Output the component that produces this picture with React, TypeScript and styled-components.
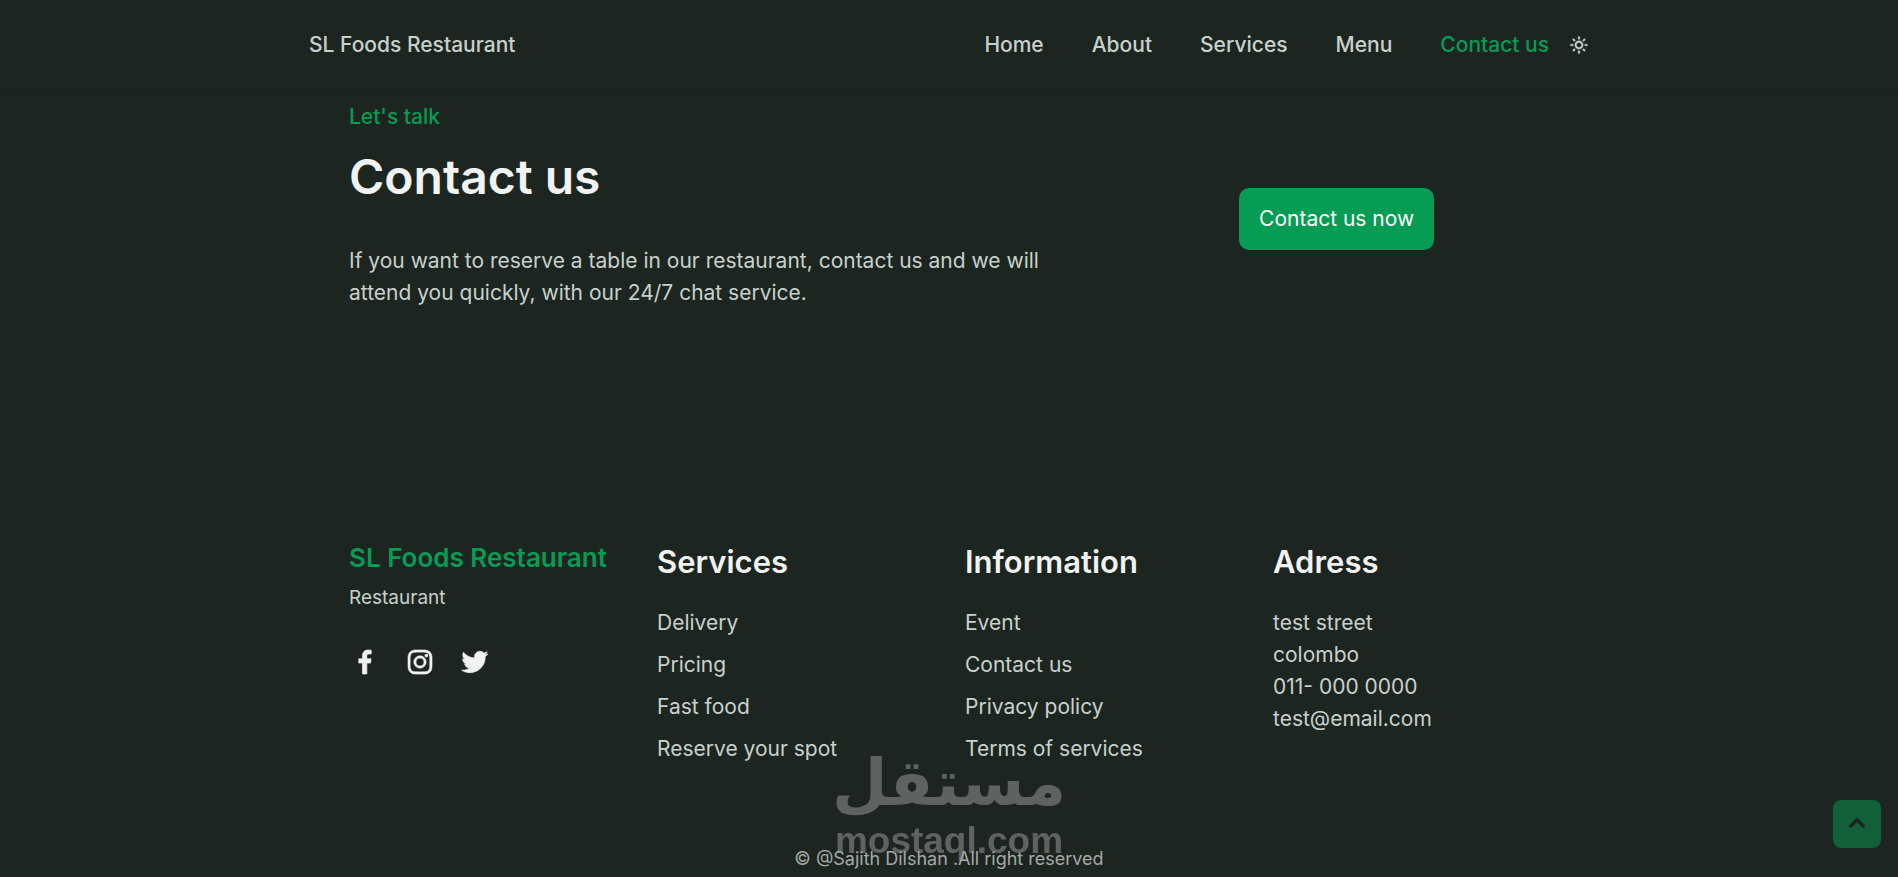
import React from "react";
import styled, { createGlobalStyle, ThemeProvider } from "styled-components";
import {
  BiSun,
  BiLogoFacebook,
  BiLogoInstagram,
  BiLogoTwitter,
  BiChevronUp,
} from "react-icons/bi";

const theme = {
  accent: "#069c54",
  title: "#f1f3f2",
  text: "#c7d1cc",
  body: "#1d2521",
};

type Theme = typeof theme;
type Themed = { theme: Theme };

const GlobalStyle = createGlobalStyle`
  * { box-sizing: border-box; margin: 0; padding: 0; }
  body {
    background: ${theme.body};
    color: ${theme.text};
    font: 400 21px/32px Inter, "Open Sans", sans-serif;
  }
  a { color: inherit; text-decoration: none; }
  ul { list-style: none; }
  button { font: inherit; border: 0; cursor: pointer; }
`;

const Header = styled.header`
  position: sticky;
  top: 0;
  z-index: 10;
  background: ${(p: Themed) => p.theme.body};
  box-shadow: 0 2px 4px rgba(0, 0, 0, 0.1);
`;

const Nav = styled.nav`
  display: flex;
  align-items: center;
  justify-content: space-between;
  max-width: 1280px;
  height: 90px;
  margin: 0 auto;
  font-weight: 500;
`;

const NavRight = styled.div`
  display: flex;
  align-items: center;
  gap: 20px;
`;

const NavList = styled.ul`
  display: flex;
  gap: 48px;
`;

const NavLink = styled.a<{ $active?: boolean }>`
  color: ${(p) => (p.$active ? theme.accent : theme.text)};
`;

const ThemeToggle = styled.button`
  display: flex;
  background: none;
  color: inherit;
  font-size: 20px;
`;

const Container = styled.div`
  max-width: 1200px;
  margin: 0 auto;
`;

const Contact = styled.section`
  display: grid;
  grid-template-columns: 1.75fr 1fr;
  gap: 32px;
  align-items: center;
  padding: 11px 0 201px;
`;

const Eyebrow = styled.span`
  display: block;
  color: ${(p: Themed) => p.theme.accent};
  font-weight: 500;
`;

const Heading = styled.h1`
  margin: 8px 0 32px;
  color: ${(p: Themed) => p.theme.title};
  font-size: 48px;
  font-weight: 600;
  line-height: 72px;
`;

const Lead = styled.p`
  margin-bottom: 28px;
`;

const ContactAction = styled.div`
  display: flex;
  justify-content: center;
`;

const PrimaryButton = styled.button`
  padding: 15px 20px;
  border-radius: 10px;
  background: ${(p: Themed) => p.theme.accent};
  color: #fff;
`;

const FooterGrid = styled.footer`
  display: grid;
  grid-template-columns: repeat(4, 1fr);
  gap: 32px;
`;

const Brand = styled.a`
  display: block;
  margin-bottom: 4px;
  color: ${(p: Themed) => p.theme.accent};
  font-size: 26px;
  font-weight: 600;
  line-height: 40px;
  white-space: nowrap;
`;

const Tagline = styled.p`
  margin-bottom: 32px;
  font-size: 19px;
`;

const Socials = styled.div`
  display: flex;
  gap: 23px;
  color: ${(p: Themed) => p.theme.title};
  font-size: 32px;
`;

const SocialLink = styled.a`
  display: flex;
`;

const ColumnTitle = styled.h3`
  margin-bottom: 21px;
  color: ${(p: Themed) => p.theme.title};
  font-size: 31px;
  font-weight: 600;
  line-height: 48px;
`;

const ItemList = styled.ul<{ $gap: number }>`
  display: grid;
  gap: ${(p) => p.$gap}px;
`;

const Copyright = styled.p`
  padding: 78px 0 3px;
  color: #a3aaa6;
  font-size: 18px;
  text-align: center;
`;

const Watermark = styled.div`
  position: fixed;
  left: 50%;
  bottom: 14px;
  z-index: 20;
  transform: translateX(-50%);
  color: #a0a0a0;
  opacity: 0.5;
  font-weight: 700;
  text-align: center;
  pointer-events: none;
`;

const WatermarkArabic = styled.div`
  font-family: "DejaVu Sans", sans-serif;
  font-size: 64px;
  line-height: 72px;
`;

const WatermarkLatin = styled.div`
  font-family: "Liberation Sans", sans-serif;
  font-size: 37px;
  line-height: 44px;
`;

const ScrollTop = styled.a`
  position: fixed;
  right: 17px;
  bottom: 29px;
  z-index: 10;
  display: flex;
  align-items: center;
  justify-content: center;
  width: 48px;
  height: 48px;
  border-radius: 8px;
  background: ${(p: Themed) => p.theme.accent};
  color: ${(p: Themed) => p.theme.body};
  font-size: 34px;
  opacity: 0.5;
`;

const navItems = ["Home", "About", "Services", "Menu", "Contact us"];

const columns = [
  { title: "Services", items: ["Delivery", "Pricing", "Fast food", "Reserve your spot"] },
  { title: "Information", items: ["Event", "Contact us", "Privacy policy", "Terms of services"] },
];

const address = ["test street", "colombo", "011- 000 0000", "test@email.com"];

const socials = [
  { label: "Facebook", Icon: BiLogoFacebook },
  { label: "Instagram", Icon: BiLogoInstagram },
  { label: "Twitter", Icon: BiLogoTwitter },
];

export default function App() {
  return (
    <ThemeProvider theme={theme}>
      <GlobalStyle />
      <Header>
        <Nav>
          <NavLink href="#home">SL Foods Restaurant</NavLink>
          <NavRight>
            <NavList>
              {navItems.map((item) => (
                <li key={item}>
                  <NavLink href="#contact" $active={item === "Contact us"}>
                    {item}
                  </NavLink>
                </li>
              ))}
            </NavList>
            <ThemeToggle aria-label="Toggle theme">
              <BiSun strokeWidth={0.5} />
            </ThemeToggle>
          </NavRight>
        </Nav>
      </Header>
      <Container>
        <Contact id="contact">
          <div>
            <Eyebrow>Let's talk</Eyebrow>
            <Heading>Contact us</Heading>
            <Lead>
              If you want to reserve a table in our restaurant, contact us and we will
              attend you quickly, with our 24/7 chat service.
            </Lead>
          </div>
          <ContactAction>
            <PrimaryButton>Contact us now</PrimaryButton>
          </ContactAction>
        </Contact>
        <FooterGrid>
          <div>
            <Brand href="#home">SL Foods Restaurant</Brand>
            <Tagline>Restaurant</Tagline>
            <Socials>
              {socials.map(({ label, Icon }) => (
                <SocialLink key={label} href="#" aria-label={label}>
                  <Icon strokeWidth={0.5} />
                </SocialLink>
              ))}
            </Socials>
          </div>
          {columns.map(({ title, items }) => (
            <div key={title}>
              <ColumnTitle>{title}</ColumnTitle>
              <ItemList $gap={10}>
                {items.map((item) => (
                  <li key={item}>
                    <a href="#">{item}</a>
                  </li>
                ))}
              </ItemList>
            </div>
          ))}
          <div>
            <ColumnTitle>Adress</ColumnTitle>
            <ItemList $gap={0}>
              {address.map((line) => (
                <li key={line}>{line}</li>
              ))}
            </ItemList>
          </div>
        </FooterGrid>
        <Copyright>© @Sajith Dilshan .All right reserved</Copyright>
      </Container>
      <Watermark>
        <WatermarkArabic lang="ar" dir="rtl">مستقل</WatermarkArabic>
        <WatermarkLatin>mostaql.com</WatermarkLatin>
      </Watermark>
      <ScrollTop href="#home" aria-label="Back to top">
        <BiChevronUp strokeWidth={0.5} />
      </ScrollTop>
    </ThemeProvider>
  );
}
